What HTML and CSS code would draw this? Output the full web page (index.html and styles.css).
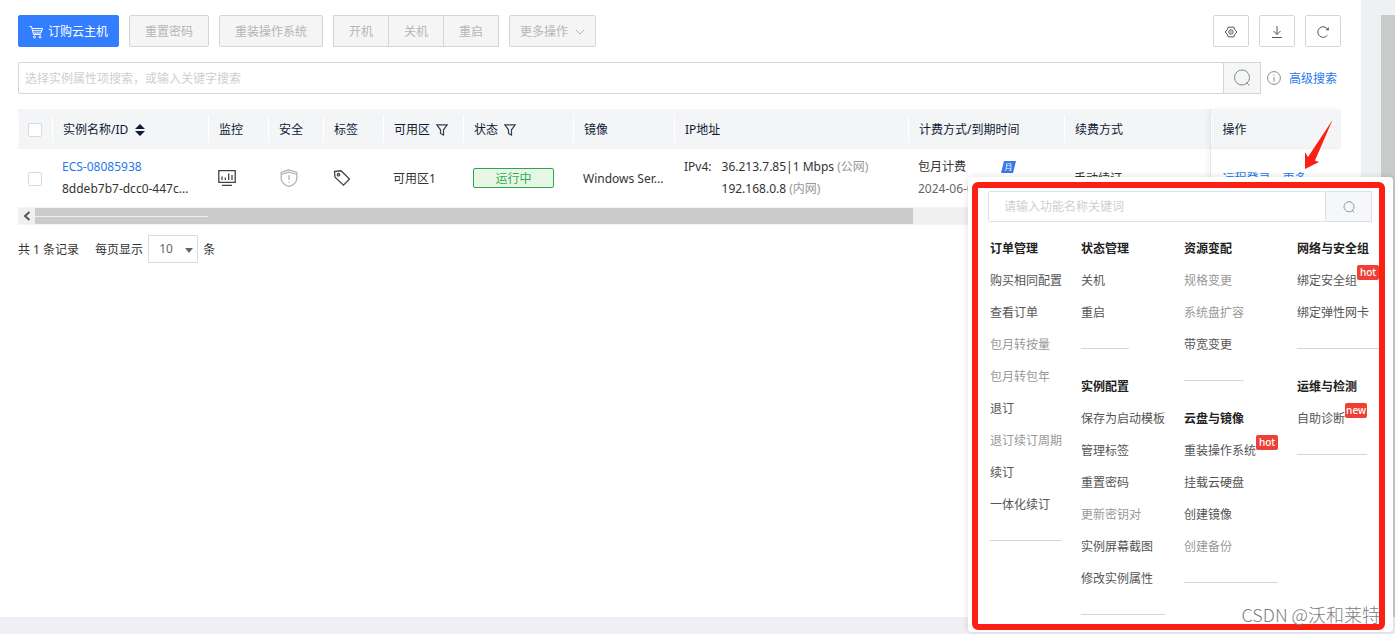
FILE: index.html
```html
<!DOCTYPE html>
<html lang="zh-CN">
<head>
<meta charset="utf-8">
<title>云主机</title>
<link rel="stylesheet" href="styles.css">
</head>
<body>
<div class="shell">
<main class="page">
  <div class="toolbar">
    <button class="btn primary"><svg class="cart" viewBox="0 0 14 14" width="14" height="14"><path d="M0.5 1.5h2l2 8h7.5M3 3.500h10.500l-1.500 4.500h-7.500M3.300 5.700h9.300"/><circle cx="5.500" cy="12" r="1"/><circle cx="11" cy="12" r="1"/></svg>订购云主机</button>
    <button class="btn" disabled>重置密码</button>
    <button class="btn" disabled>重装操作系统</button>
    <div class="btn-group">
      <button class="btn" disabled>开机</button><button class="btn" disabled>关机</button><button class="btn" disabled>重启</button>
    </div>
    <button class="btn more" disabled>更多操作<svg viewBox="0 0 10 10" width="10" height="10"><path d="M1 3l4 4 4-4"/></svg></button>
    <div class="tools">
      <button class="tool" aria-label="设置"><svg viewBox="0 0 14 14" width="14" height="14"><path d="M4.200 2.200h5.600l1 2.600 2.200 2.200-2.200 2.200-1 2.600h-5.600l-1-2.600-2.200-2.200 2.200-2.200z"/><circle cx="7" cy="7" r="2.200"/><circle cx="7" cy="7" r=".3"/></svg></button>
      <button class="tool" aria-label="下载"><svg viewBox="0 0 14 14" width="14" height="14"><path d="M7 1v8.500M3.500 6l3.500 3.500 3.500-3.500M2 12.500h10"/></svg></button>
      <button class="tool" aria-label="刷新"><svg viewBox="0 0 14 14" width="14" height="14"><path d="M11.400 10.200a5.300 5.300 0 1 1 .2-6"/><path class="solid" d="M12.800 2v3.200h-3.200z"/></svg></button>
    </div>
  </div>

  <div class="search">
    <input class="search-input" type="text" aria-label="搜索实例" placeholder="选择实例属性项搜索，或输入关键字搜索">
    <button class="search-btn" aria-label="搜索"><svg viewBox="0 0 18 18" width="18" height="18"><circle cx="9" cy="8.500" r="7.500"/><path d="M13.500 13.500l3 3"/></svg></button>
    <svg class="info" viewBox="0 0 14 14" width="14" height="14"><circle cx="7" cy="7" r="6.400"/><path d="M7 6v4.500M7 3.500v1.200"/></svg>
    <a class="link advanced" href="#">高级搜索</a>
  </div>

  <table class="grid">
    <colgroup><col class="c34"><col class="c156"><col class="c60"><col class="c55"><col class="c60"><col class="c80"><col class="c110"><col class="c101"><col><col class="c156"><col class="c146"><col class="c131"></colgroup>
    <thead>
      <tr>
        <th><input type="checkbox" aria-label="全选"></th>
        <th><span class="head">实例名称/ID<svg viewBox="0 0 10 12" width="10" height="12"><path class="solid" d="M5 0l5 5H0zM0 7h10l-5 5z"/></svg></span></th>
        <th>监控</th><th>安全</th><th>标签</th>
        <th><span class="head tight">可用区<svg viewBox="0 0 12 12" width="12" height="12"><path d="M.8.800h10.400l-3.700 5v5.200l-3-1.500v-3.700z"/></svg></span></th>
        <th><span class="head tight">状态<svg viewBox="0 0 12 12" width="12" height="12"><path d="M.8.800h10.400l-3.700 5v5.200l-3-1.500v-3.700z"/></svg></span></th>
        <th>镜像</th><th>IP地址</th><th>计费方式/到期时间</th><th>续费方式</th><th class="fixed">操作</th>
      </tr>
    </thead>
    <tbody>
      <tr>
        <td><input type="checkbox" aria-label="选择 ECS-08085938"></td>
        <td><a class="link" href="#">ECS-08085938</a><div>8ddeb7b7-dcc0-447c...</div></td>
        <td><svg class="icon" viewBox="0 0 18 18" width="18" height="18"><path d="M.8 1.700h16.400v11.600h-16.400zM4 16.300h10M4 7.500v3.500M7.300 8.500v2.500M10.700 4.500v6.500M14 6v5"/></svg></td>
        <td><svg class="icon shield" viewBox="0 0 18 18" width="18" height="18"><path d="M9 .8l7.800 2.700v6c0 4-3.300 6.500-7.800 8-4.500-1.500-7.800-4-7.800-8v-6zM1.200 5.500l7.800-2.300 7.800 2.300M9 6v5M9 12.500v1"/></svg></td>
        <td><svg class="icon" viewBox="0 0 18 18" width="18" height="18"><path d="M1.500 2.500l6.500-.7 8.500 8.200-6 6.200-8.500-8z"/><circle cx="5.500" cy="5.700" r="1.200"/></svg></td>
        <td class="single">可用区1</td>
        <td><span class="status">运行中</span></td>
        <td class="single">Windows Ser...</td>
        <td><div class="ips"><span>IPv4:</span><div><div>36.213.7.85|1 Mbps <em>(公网)</em></div><div>192.168.0.8 <em>(内网)</em></div></div></div></td>
        <td><div class="bill">包月计费<span class="month">月</span></div><div class="date">2024-06-08</div></td>
        <td class="single">手动续订</td>
        <td class="fixed single"><a class="link" href="#">远程登录</a><a class="link next" href="#">更多</a></td>
      </tr>
    </tbody>
  </table>
  <div class="hscroll"><span class="arrow"><svg viewBox="0 0 8 10" width="8" height="10"><path d="M6.500 1l-4.500 4 4.500 4"/></svg></span><div class="thumb"><div class="line"></div></div></div>

  <div class="pager">
    <span>共 1 条记录</span>
    <label for="size">每页显示</label>
    <span class="select"><select id="size"><option>10</option></select></span>
    <span>条</span>
  </div>
</main>
<div class="vscroll"></div>
</div>

<section class="popup">
  <div class="frame"></div>
  <div class="psearch">
    <input type="text" aria-label="搜索功能" placeholder="请输入功能名称关键词">
    <button aria-label="搜索功能"><svg viewBox="0 0 14 14" width="12" height="12"><circle cx="7" cy="6.700" r="5.900"/><path d="M10.500 11l2.500 2"/></svg></button>
  </div>
  <div class="menu">
    <div class="col">
      <div class="group"><h3>订单管理</h3><a href="#">购买相同配置</a><a href="#">查看订单</a><a class="off">包月转按量</a><a class="off">包月转包年</a><a href="#">退订</a><a class="off">退订续订周期</a><a href="#">续订</a><a href="#">一体化续订</a></div>
    </div>
    <div class="col">
      <div class="group"><h3>状态管理</h3><a href="#">关机</a><a href="#">重启</a></div>
      <div class="group"><h3>实例配置</h3><a href="#">保存为启动模板</a><a href="#">管理标签</a><a href="#">重置密码</a><a class="off">更新密钥对</a><a href="#">实例屏幕截图</a><a href="#">修改实例属性</a></div>
    </div>
    <div class="col">
      <div class="group"><h3>资源变配</h3><a class="off">规格变更</a><a class="off">系统盘扩容</a><a href="#">带宽变更</a></div>
      <div class="group"><h3>云盘与镜像</h3><a href="#">重装操作系统<b>hot</b></a><a href="#">挂载云硬盘</a><a href="#">创建镜像</a><a class="off">创建备份</a></div>
    </div>
    <div class="col">
      <div class="group"><h3>网络与安全组</h3><a href="#">绑定安全组<b>hot</b></a><a href="#">绑定弹性网卡</a></div>
      <div class="group"><h3>运维与检测</h3><a href="#">自助诊断<b>new</b></a></div>
    </div>
  </div>
  <div class="mark">CSDN @沃和莱特</div>
</section>
<svg class="pointer" viewBox="0 0 32 52" width="32" height="52"><path d="M30.500 0L13 40.500l4 1.500-14 7V32l3 5z"/></svg>
</body>
</html>
```
FILE: styles.css
```css
* { box-sizing: border-box; }
body {
  margin: 0;
  position: relative;
  min-height: 100vh;
  background: #eef0f4;
  color: #333;
  font: 12px/22px "Noto Sans", "Noto Sans CJK SC", sans-serif;
  overflow: hidden;
}
button, input, select { font: inherit; margin: 0; }
svg { fill: none; stroke: #555; stroke-width: 1; flex: none; }
.solid { fill: currentColor; stroke: none; }
a { text-decoration: none; color: inherit; }
.link { color: #2878ee; }

.shell { display: flex; gap: 20px; height: calc(100vh - 17px); }
.page { flex: 1; min-width: 0; background: #fff; padding: 15px 20px 0 18px; }
.vscroll { width: 14px; margin-top: 15px; background: #c9caca; }

.toolbar { display: flex; gap: 10px; }
.btn {
  height: 32px;
  padding: 2px 15px 0;
  border: 1px solid #d4d6d6;
  border-radius: 2px;
  background: #f5f5f5;
  color: #b4b6b6;
  display: flex;
  align-items: center;
  white-space: nowrap;
}
.primary { background: #337dff; border-color: #337dff; color: #fff; padding: 2px 10px 0; gap: 5px; }
.cart { stroke: #fff; }
.more { padding: 2px 10px 0; gap: 7px; }
.more svg { stroke: #b4b6b6; }
.btn-group { display: flex; }
.btn-group .btn { border-radius: 0; }
.btn-group .btn + .btn { border-left: 0; }
.tools { display: flex; gap: 10px; margin-left: auto; }
.tool {
  width: 36px;
  height: 32px;
  padding: 2px 0 0;
  border: 1px solid #d4d6d6;
  border-radius: 2px;
  background: #fff;
  color: #555;
  display: grid;
  place-items: center;
}

.search { display: flex; align-items: center; margin: 15px 4px 15px 0; }
.search-input {
  flex: 1;
  height: 32px;
  padding: 0 6px;
  border: 1px solid #d4d6d6;
  border-radius: 2px 0 0 2px;
}
input::placeholder { color: #ccd0d3; opacity: 1; }
.search-btn {
  width: 37px;
  height: 32px;
  padding: 0;
  border: 1px solid #d4d6d6;
  border-left: 0;
  background: #f5f6f6;
  display: grid;
  place-items: center;
}
.search-btn svg { stroke: #888; }
.info { margin: 0 8px 0 6px; stroke: #888; }
.advanced { padding-top: 2px; }

.grid { width: 100%; border-collapse: collapse; table-layout: fixed; }
.c34 { width: 34px; } .c55 { width: 55px; } .c60 { width: 60px; } .c80 { width: 80px; }
.c101 { width: 101px; } .c110 { width: 110px; } .c131 { width: 131px; }
.c146 { width: 146px; } .c156 { width: 156px; }
.grid th {
  height: 40px;
  padding: 2px 10px 0 11px;
  text-align: left;
  font-weight: 400;
  color: #0f1a33;
  white-space: nowrap;
  background: linear-gradient(#fff, #fff) left center / 1px 28px no-repeat #f3f5f7;
}
.grid td { height: 58px; padding: 0 10px; white-space: nowrap; }
.grid .single { padding-top: 2px; }
.grid th:first-child, .grid td:first-child { text-align: center; padding: 0; }
.grid .fixed { border-left: 1px solid #e3e5e8; padding-left: 12px; box-shadow: -3px 0 4px #0000000a; }
.grid input {
  appearance: none;
  width: 14px;
  height: 14px;
  border: 1px solid #d6dade;
  border-radius: 2px;
  background: #fff;
  vertical-align: middle;
}
.head { display: inline-flex; align-items: center; gap: 7px; }
.tight { gap: 6px; }
.tight svg { stroke: #333f50; stroke-width: 1.2; }
.icon { display: block; stroke: #444; stroke-width: 1.3; }
.shield { margin-left: 2px; stroke: #b4b4b4; }
.status {
  display: block;
  height: 20px;
  width: 81px;
  padding-top: 1px;
  line-height: 18px;
  border: 1px solid #2ba84a;
  border-radius: 2px;
  background: #e8f6e5;
  color: #2cb04e;
  text-align: center;
}
.ips { display: flex; gap: 10px; }
.grid em { color: #999; font-style: normal; }
.bill { display: flex; align-items: center; }
.month {
  margin-left: 35px;
  width: 15px;
  height: 12px;
  background: #3a78e8;
  clip-path: polygon(3px 0, 100% 0, 12px 100%, 0 100%);
  color: #fff;
  font-size: 8px;
  line-height: 12px;
  text-align: center;
}
.date { color: #666; }
.next { margin-left: 12px; }

.hscroll { display: flex; height: 18px; background: #f0f0f0; border: 1px solid #f4f4f4; }
.arrow { width: 16px; display: grid; place-items: center; }
.arrow svg { stroke-width: 2; }
.thumb { width: 66.5%; background: #cbcbcb; display: flex; align-items: center; }
.line { width: 173px; height: 1px; background: #eee; }

.pager { display: flex; align-items: center; margin-top: 10px; }
.pager > span, .pager label { padding-top: 1px; }
.pager label { margin: 0 5px 0 16px; }
.pager .select { position: relative; margin-right: 5px; padding: 0; }
.select::after {
  content: "";
  position: absolute;
  right: 5px;
  top: 13px;
  border: 4px solid transparent;
  border-top: 5px solid #666;
  border-bottom: 0;
}
.select select {
  appearance: none;
  display: block;
  width: 50px;
  height: 28px;
  padding: 0 10px;
  border: 1px solid #d3dde6;
  background: #fff;
  color: #666;
}

.popup {
  position: absolute;
  top: 177px;
  right: 2px;
  width: 425px;
  padding: 14px 21px 0 20px;
  height: 455px;
  background: #fff;
  border-radius: 4px;
  box-shadow: 0 0 6px #00000024;
}
.frame {
  position: absolute;
  inset: 5px 8px 2px 4px;
  border: 6px solid #fc1f14;
  border-radius: 6px;
  pointer-events: none;
  z-index: 2;
}
.psearch { display: flex; height: 31px; }
.psearch input { flex: 1; min-width: 0; border: 1px solid #dcdfe3; padding: 0 15px; border-radius: 2px; }
.psearch button {
  width: 46px;
  border: 1px solid #dcdfe3;
  border-left: 0;
  background: #f5f7fa;
  display: grid;
  place-items: center;
}
.psearch svg { stroke: #888; }
.menu { display: flex; gap: 19px; padding: 11px 0 0 2px; white-space: nowrap; color: #555; }
.col { display: flex; flex-direction: column; align-items: flex-start; gap: 21px; }
.group { padding-bottom: 19px; border-bottom: 1px solid #d6d6d6; line-height: 32px; }
.group + .group { margin-top: 1px; }
.group h3 { margin: 0; font-size: 12px; font-weight: 700; color: #222; }
.group a { display: flex; align-items: flex-start; height: 32px; }
.group .off { color: #999; }
.group b {
  width: 22px;
  height: 15px;
  border-radius: 2px;
  background: #ee4035;
  color: #fff;
  font-size: 10px;
  font-weight: 500;
  line-height: 15px;
  text-align: center;
}
.mark {
  position: absolute;
  right: 13px;
  bottom: 6px;
  font: 18px/24px "Noto Sans CJK SC", sans-serif;
  font-weight: 300;
  color: #808080;
  z-index: 3;
}
.pointer { position: absolute; right: 61px; top: 120px; stroke: none; fill: #fc1f14; }
```
